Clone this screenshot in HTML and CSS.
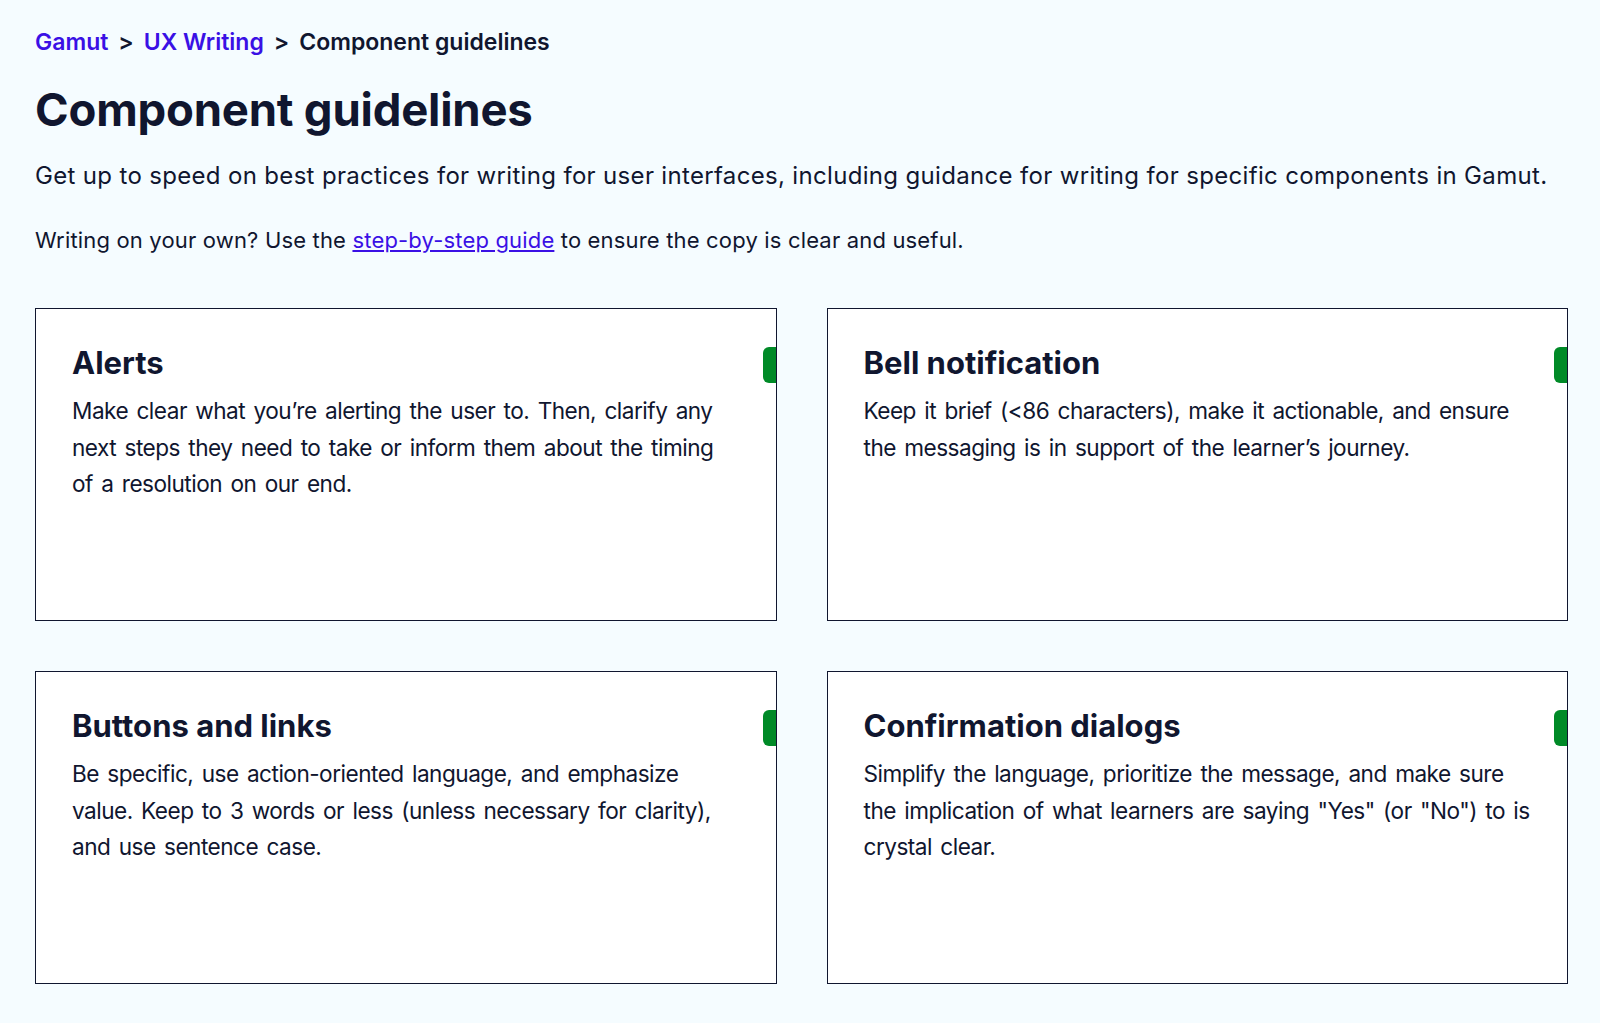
FILE: index.html
```html
<!DOCTYPE html>
<html lang="en">
<head>
<meta charset="utf-8">
<title>Component guidelines</title>
<link rel="stylesheet" href="styles.css">
</head>
<body>
<main class="page">
  <nav class="crumbs">
    <a class="crumb-link" href="#">Gamut</a>
    <span class="sep">&gt;</span>
    <a class="crumb-link" href="#">UX Writing</a>
    <span class="sep">&gt;</span>
    <span class="crumb-current">Component guidelines</span>
  </nav>
  <h1 class="title">Component guidelines</h1>
  <p class="lead">Get up to speed on best practices for writing for user interfaces, including guidance for writing for specific components in Gamut.</p>
  <p class="note">Writing on your own? Use the <a class="inline-link" href="#">step-by-step guide</a> to ensure the copy is clear and useful.</p>
  <section class="grid">
    <article class="card">
      <span class="tab"></span>
      <h2 class="card-title">Alerts</h2>
      <p class="card-text">Make clear what you’re alerting the user to. Then, clarify any next steps they need to take or inform them about the timing of a resolution on our end.</p>
    </article>
    <article class="card">
      <span class="tab"></span>
      <h2 class="card-title">Bell notification</h2>
      <p class="card-text">Keep it brief (&lt;86 characters), make it actionable, and ensure the messaging is in support of the learner’s journey.</p>
    </article>
    <article class="card">
      <span class="tab"></span>
      <h2 class="card-title">Buttons and links</h2>
      <p class="card-text">Be specific, use action-oriented language, and emphasize value. Keep to 3 words or less (unless necessary for clarity), and use sentence case.</p>
    </article>
    <article class="card">
      <span class="tab"></span>
      <h2 class="card-title">Confirmation dialogs</h2>
      <p class="card-text">Simplify the language, prioritize the message, and make sure the implication of what learners are saying "Yes" (or "No") to is crystal clear.</p>
    </article>
  </section>
</main>
</body>
</html>
```

FILE: styles.css
```css
html, body {
  margin: 0;
  padding: 0;
  background: #f5fcff;
}
body {
  font-family: Inter, "Liberation Sans", sans-serif;
  color: #10162f;
}
.page {
  padding: 26px 32px 40px 35px;
}
.crumbs {
  display: flex;
  align-items: center;
  gap: 10px;
  font-size: 23px;
  font-weight: 600;
  line-height: 32px;
}
.crumb-link {
  color: #3a10e5;
  text-decoration: none;
}
.sep {
  color: #10162f;
}
.title {
  margin: 22px 0 0;
  font-size: 45.5px;
  font-weight: 700;
  line-height: 60px;
  letter-spacing: -0.2px;
}
.lead {
  margin: 18px 0 0;
  font-size: 24px;
  line-height: 36px;
  letter-spacing: 0.33px;
}
.note {
  margin: 30px 0 0;
  font-size: 22px;
  line-height: 32px;
  letter-spacing: 0.17px;
}
.inline-link {
  color: #3a10e5;
  text-decoration: underline;
}
.grid {
  display: grid;
  grid-template-columns: 1fr 1fr;
  gap: 50px;
  margin-top: 52px;
}
.card {
  position: relative;
  height: 313px;
  box-sizing: border-box;
  background: #ffffff;
  border: 1px solid #10162f;
  padding: 34px 36px;
}
.tab {
  position: absolute;
  top: 38px;
  right: 0;
  width: 13px;
  height: 36px;
  background: #008a27;
  border-radius: 6px 0 0 6px;
}
.card-title {
  margin: 0;
  font-size: 31px;
  font-weight: 700;
  line-height: 40px;
}
.card-text {
  margin: 10px 0 0;
  font-size: 22.58px;
  line-height: 36.5px;
  letter-spacing: -0.5px;
  word-spacing: 2.5px;
}
```
